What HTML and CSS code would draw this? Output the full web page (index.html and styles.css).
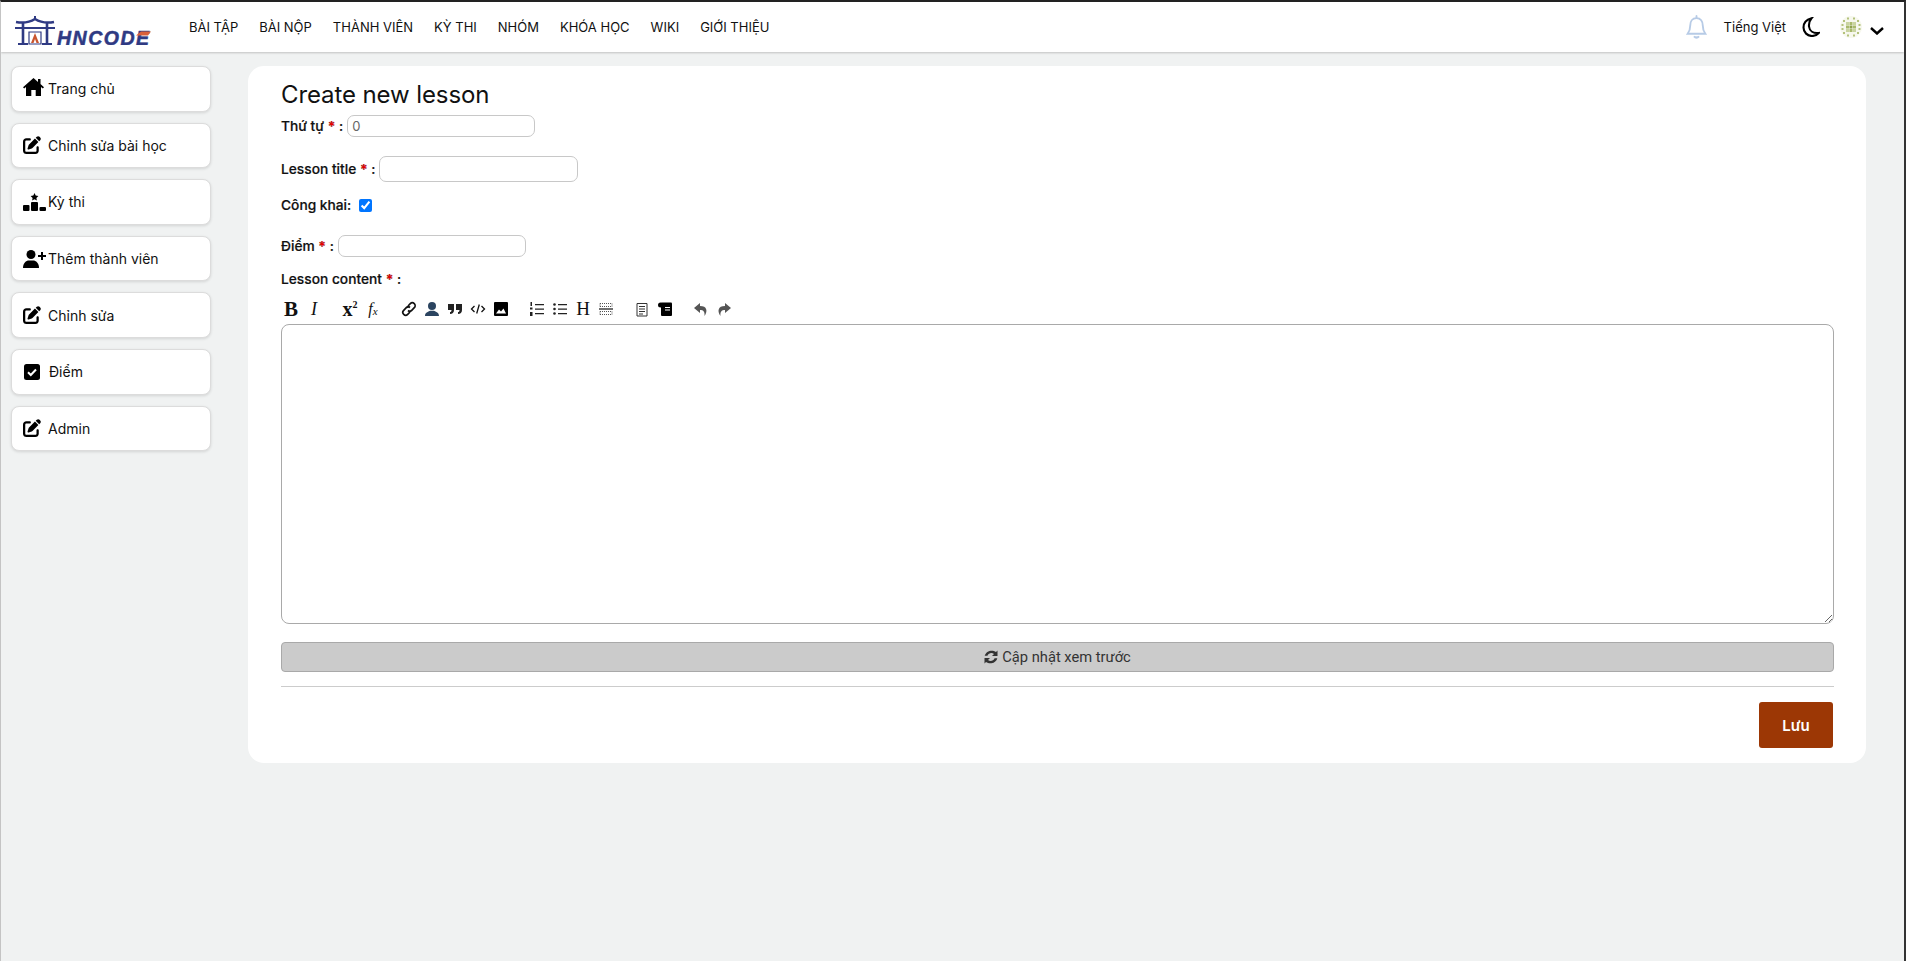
FILE: index.html
```html
<!DOCTYPE html>
<html>
<head>
    <meta charset="UTF-8">
    <link rel="stylesheet" href="styles.css">
</head>
<body>
<svg class="defs" width="0" height="0">
    <symbol id="i-edit" viewBox="0 0 512 512"><path d="M471.6 21.7c-21.9-21.9-57.3-21.9-79.2 0L362.3 51.7l97.9 97.9 30.1-30.1c21.9-21.9 21.9-57.3 0-79.2L471.6 21.7zm-299.2 220c-6.1 6.1-10.8 13.6-13.5 21.9l-29.6 88.8c-2.9 8.6-.6 18.1 5.8 24.6s15.9 8.7 24.6 5.8l88.8-29.6c8.2-2.7 15.7-7.4 21.9-13.5L437.7 172.3 339.7 74.3 172.4 241.7zM96 64C43 64 0 107 0 160V416c0 53 43 96 96 96H352c53 0 96-43 96-96V320c0-17.7-14.3-32-32-32s-32 14.3-32 32v96c0 17.7-14.3 32-32 32H96c-17.7 0-32-14.3-32-32V160c0-17.7 14.3-32 32-32h96c17.7 0 32-14.3 32-32s-14.3-32-32-32H96z"/></symbol>
</svg>

<nav class="navbar">
    <a class="logo">
        <svg width="138" height="32" viewBox="0 0 138 32">
            <g fill="none" stroke="#2f3a83">
                <path d="M1 9 Q12 11 20 6 Q28 11 39 9" stroke-width="2.600"/>
                <path d="M20 6V3" stroke-width="2"/>
                <path d="M0 15H40" stroke-width="2.200"/>
                <path d="M8 10V31M32 10V31" stroke-width="2.600"/>
                <path d="M3 31H13M27 31H37" stroke-width="2"/>
                <path d="M14 19H26V31H14Z" stroke-width="1.200"/>
            </g>
            <path d="M20 20L16 30H18.500L20 26L21.500 30H24Z" fill="#c9552f"/>
            <text x="42" y="32" class="logo-text">HNCODE</text>
            <path d="M121 22.500L133 22.500L136 18.500L126 18.500Z" fill="#d9603a"/>
        </svg>
    </a>
    <ul class="nav-links">
        <li>BÀI TẬP</li>
        <li>BÀI NỘP</li>
        <li>THÀNH VIÊN</li>
        <li>KỲ THI</li>
        <li>NHÓM</li>
        <li>KHÓA HỌC</li>
        <li>WIKI</li>
        <li>GIỚI THIỆU</li>
    </ul>
    <div class="nav-right">
        <svg class="bell" width="21" height="24" viewBox="0 0 20 23" fill="none" stroke="#b7cbe6" stroke-width="1.800">
            <path d="M10 3C6 3 4 6 4 10C4 14 3 16 1.500 18H18.500C17 16 16 14 16 10C16 6 14 3 10 3Z"/>
            <path d="M10 1V3" stroke-linecap="round"/>
            <path d="M7.500 20.500Q10 23 12.500 20.500" fill="#b7cbe6"/>
        </svg>
        <span class="lang">Tiếng Việt</span>
        <svg class="moon" width="18" height="20" viewBox="0 0 18 20" fill="none" stroke="#000" stroke-width="2.100">
            <path d="M9.500 1.200C4.500 2.500 1.500 6 1.500 10.500C1.500 15.500 5.500 19 10 19C12.800 19 15 18 16.700 16C11.500 16.500 7.500 14 7 9.500C6.700 6 7.500 3.500 9.500 1.200Z"/>
        </svg>
        <svg class="avatar" width="22" height="22" viewBox="0 0 22 22" fill="#a9b96b">
            <rect width="22" height="22" rx="11" fill="#f7f8ee"/>
            <g fill="#c9d4a0">
                <rect x="6" y="6" width="3" height="3"/><rect x="13" y="6" width="3" height="3"/>
                <rect x="6" y="13" width="3" height="3"/><rect x="13" y="13" width="3" height="3"/>
            </g>
            <rect x="9.500" y="6" width="3" height="3"/><rect x="9.500" y="13" width="3" height="3"/>
            <rect x="6" y="9.500" width="3" height="3"/><rect x="13" y="9.500" width="3" height="3"/>
            <rect x="9.500" y="9.500" width="3" height="3" fill="#8fa24e"/>
            <g fill="#b4c27c">
                <rect x="3" y="4" width="2" height="2"/><rect x="7" y="1.500" width="2" height="2"/><rect x="13" y="1.500" width="2" height="2"/><rect x="17" y="4" width="2" height="2"/>
                <rect x="1.500" y="8" width="2" height="2"/><rect x="18.500" y="8" width="2" height="2"/><rect x="1.500" y="12" width="2" height="2"/><rect x="18.500" y="12" width="2" height="2"/>
                <rect x="3" y="16" width="2" height="2"/><rect x="7" y="18.500" width="2" height="2"/><rect x="13" y="18.500" width="2" height="2"/><rect x="17" y="16" width="2" height="2"/>
            </g>
        </svg>
        <svg class="chevron" width="14" height="8" viewBox="0 0 14 8" fill="none" stroke="#000" stroke-width="2.400">
            <path d="M1 1L7 6.500L13 1"/>
        </svg>
    </div>
</nav>

<div class="wrapper">
    <aside class="sidebar">
        <a class="side-item">
            <svg class="side-icon home" width="21" height="18" viewBox="0 0 21 18"><path d="M10.500 0L0 9.200L1.200 10.500L3 9V18H8.300V12H12.700V18H18V9L19.800 10.500L21 9.200L17.500 6.100V1H15V4L10.500 0Z"/></svg>
            <span>Trang chủ</span>
        </a>
        <a class="side-item">
            <svg class="side-icon edit" width="18" height="18"><use href="#i-edit"/></svg>
            <span>Chỉnh sửa bài học</span>
        </a>
        <a class="side-item">
            <svg class="side-icon wide" width="23" height="18" viewBox="0 0 23 18"><path d="M11.500 0L12.700 2.600L15.400 3L13.400 4.900L13.900 7.600L11.500 6.300L9.100 7.600L9.600 4.900L7.600 3L10.300 2.600Z"/><rect x="8" y="9" width="7" height="9" rx="1"/><rect y="12" width="6.500" height="6" rx="1"/><rect x="16.500" y="14" width="6.500" height="4" rx="1"/></svg>
            <span>Kỳ thi</span>
        </a>
        <a class="side-item">
            <svg class="side-icon wide" width="23" height="18" viewBox="0 0 23 18"><circle cx="8" cy="4.500" r="4.500"/><path d="M0 18C0 13 3 10.500 6 10.500H10C13 10.500 16 13 16 18Z"/><path d="M18 3H20V6H23V8H20V11H18V8H15V6H18Z" transform="translate(0 -1)"/></svg>
            <span>Thêm thành viên</span>
        </a>
        <a class="side-item">
            <svg class="side-icon edit" width="18" height="18"><use href="#i-edit"/></svg>
            <span>Chỉnh sửa</span>
        </a>
        <a class="side-item">
            <svg class="side-icon check" width="16" height="16" viewBox="0 0 16 16"><rect width="16" height="16" rx="2.500"/><path d="M4 8.200L6.800 11L12 5.500" fill="none" stroke="#fff" stroke-width="2"/></svg>
            <span>Điểm</span>
        </a>
        <a class="side-item">
            <svg class="side-icon edit" width="18" height="18"><use href="#i-edit"/></svg>
            <span>Admin</span>
        </a>
    </aside>

    <main class="card">
        <h2 class="title">Create new lesson</h2>
        <form>
            <div class="row row-order">
                <label>Thứ tự <b class="req">*</b> :</label>
                <input class="field" type="text" placeholder="0">
            </div>
            <div class="row row-lesson">
                <label>Lesson title <b class="req">*</b> :</label>
                <input class="field field-lg" type="text">
            </div>
            <div class="row row-public">
                <label>Công khai:</label>
                <input class="check-box" type="checkbox" checked>
            </div>
            <div class="row row-score">
                <label>Điểm <b class="req">*</b> :</label>
                <input class="field" type="text">
            </div>
            <div class="row row-content">
                <label>Lesson content <b class="req">*</b> :</label>
            </div>

            <div class="toolbar">
                <div class="tool-group">
                    <span class="tool tool-text bold b-btn">B</span>
                    <span class="tool tool-text italic">I</span>
                </div>
                <div class="tool-group">
                    <span class="tool tool-text bold sup-btn">x<sup>2</sup></span>
                    <span class="tool tool-text fx">f<sub>x</sub></span>
                </div>
                <div class="tool-group">
                    <svg class="tool" width="16" height="16" viewBox="0 0 16 16" fill="none" stroke="#111" stroke-width="1.700"><path d="M7 5L9.300 2.700A2.700 2.700 0 0 1 13.300 6.700L10.500 9.500A2.700 2.700 0 0 1 7 9.500"/><path d="M9 11L6.700 13.300A2.700 2.700 0 0 1 2.700 9.300L5.500 6.500A2.700 2.700 0 0 1 9 6.500"/></svg>
                    <svg class="tool" width="16" height="16" viewBox="0 0 16 16" fill="#2b4460"><circle cx="8" cy="5" r="4"/><path d="M1 15C1 11.500 4 10.800 6.300 9.800H9.700C12 10.800 15 11.500 15 15Z"/></svg>
                    <svg class="tool" width="16" height="16" viewBox="0 0 16 16" fill="#222"><path d="M1 3H7V9C7 11.500 5.500 13 3 13V11C4 11 4.500 10.500 4.500 9H1Z"/><path d="M9 3H15V9C15 11.500 13.500 13 11 13V11C12 11 12.500 10.500 12.500 9H9Z"/></svg>
                    <svg class="tool" width="16" height="16" viewBox="0 0 16 16" fill="none" stroke="#111" stroke-width="1.300"><path d="M4.500 5L1.500 8L4.500 11M11.500 5L14.500 8L11.500 11M9.300 3.500L6.700 12.500"/></svg>
                    <svg class="tool" width="16" height="16" viewBox="0 0 16 16"><rect x="1" y="1" width="14" height="14" rx="1"/><path d="M3 12.500L6 8.500L8 10.500L10.500 7.500L13 12.500Z" fill="#fff"/></svg>
                </div>
                <div class="tool-group">
                    <svg class="tool" width="16" height="16" viewBox="0 0 16 16" fill="#222"><path d="M1.500 1H3V5H1.500ZM1 6.500H3.500V8.500H1ZM1 11H3.500V15H1Z"/><path d="M6 3H15V4.300H6ZM6 7.500H15V8.800H6ZM6 12H15V13.300H6Z"/></svg>
                    <svg class="tool" width="16" height="16" viewBox="0 0 16 16" fill="#222"><circle cx="2.500" cy="3.500" r="1.300"/><circle cx="2.500" cy="8" r="1.300"/><circle cx="2.500" cy="12.500" r="1.300"/><path d="M6 3H15V4.300H6ZM6 7.500H15V8.800H6ZM6 12H15V13.300H6Z"/></svg>
                    <span class="tool tool-text heading">H</span>
                    <svg class="tool" width="16" height="16" viewBox="0 0 16 16" fill="none" stroke="#555"><path d="M2 2.500H14M2 5.500H14M2 10.500H14M2 13.500H14M2 2.500V5.500M14 2.500V5.500M2 10.500V13.500M14 10.500V13.500" stroke-dasharray="1 1"/><path d="M1 8H15" stroke="#222" stroke-width="1.300"/></svg>
                </div>
                <div class="tool-group">
                    <svg class="tool" width="16" height="16" viewBox="0 0 16 16" fill="none" stroke="#333"><path d="M3 2.500H13V15H3Z"/><path d="M5 5.500H11M5 8H11M5 10.500H11M5 13H9"/></svg>
                    <svg class="tool" width="16" height="16" viewBox="0 0 16 16"><rect x="4" y="1.500" width="11" height="13.500" rx="1"/><circle cx="3.500" cy="4" r="2.500"/><path d="M8 6.500H13M8 9H13" stroke="#fff" stroke-width="1.200"/></svg>
                </div>
                <div class="tool-group">
                    <svg class="tool" width="16" height="16" viewBox="0 0 16 16" fill="#555"><path d="M7 2L1 7L7 12V9C10 9 12 10 11.500 15C15 10 14 5 7 5Z"/></svg>
                    <svg class="tool" width="16" height="16" viewBox="0 0 16 16" fill="#555"><path d="M9 2L15 7L9 12V9C6 9 4 10 4.500 15C1 10 2 5 9 5Z"/></svg>
                </div>
            </div>

            <textarea class="editor"></textarea>

            <button class="preview" type="button">
                <svg width="14" height="14" viewBox="0 0 14 14" fill="#333"><path d="M13.500 .5V6H8L10 4C7.800 2.300 4.600 3 3.400 5.800H.7C2 1 8 -.9 12 2Z"/><path d="M.5 13.500V8H6L4 10C6.200 11.700 9.400 11 10.600 8.200H13.300C12 13 6 14.900 2 12Z"/></svg>
                Cập nhật xem trước
            </button>
            <hr class="divider">
            <div class="actions">
                <button class="save" type="button">Lưu</button>
            </div>
        </form>
    </main>
</div>
</body>
</html>
```

FILE: styles.css
```css
* {
    box-sizing: border-box;
}

html, body {
    height: 100%;
}

body {
    margin: 0;
    overflow: hidden;
    background-color: #f0f2f2;
    border-top: 2px solid #222;
    border-left: 1px solid #c4c4c4;
    border-right: 2px solid #333;
    font-family: Inter, "Noto Sans", sans-serif;
    font-size: 14px;
    color: #111;
}

.defs {
    display: block;
}

/* top bar */
.navbar {
    display: flex;
    align-items: center;
    height: 50px;
    padding-left: 14px;
    background-color: #fff;
    box-shadow: 0 1px 2px rgba(0, 0, 0, 0.2);
}

.logo {
    display: block;
    height: 32px;
    width: 138px;
    margin-top: 4px;
}

.logo-text {
    font-family: "Liberation Sans", sans-serif;
    font-weight: 700;
    font-style: italic;
    font-size: 19.500px;
    letter-spacing: 1.500px;
    fill: #2f3a83;
    stroke: #2f3a83;
    stroke-width: 0.500px;
}

.nav-links {
    display: flex;
    gap: 21px;
    list-style: none;
    margin: 0 0 0 36px;
    padding: 0;
    font-family: Inter, sans-serif;
    font-size: 13px;
    color: #111;
}

.nav-right {
    display: flex;
    align-items: center;
    margin-left: auto;
    padding-right: 20px;
}

.bell {
    margin-right: 1px;
}

.lang {
    margin-left: 16px;
    font-family: Inter, sans-serif;
    font-size: 13px;
}

.moon {
    margin-left: 16px;
}

.avatar {
    margin-left: 20px;
}

.chevron {
    margin-left: 8px;
    margin-top: 7px;
}

/* page body */
.wrapper {
    display: flex;
    align-items: flex-start;
    padding: 14px 38px 0 10px;
}

.sidebar {
    display: flex;
    flex-direction: column;
    gap: 11px;
    flex: 0 0 200px;
    margin-right: 37px;
}

.side-item {
    display: flex;
    align-items: center;
    height: 45.600px;
    padding-left: 11px;
    background-color: #fff;
    border: 1px solid #dcdcdc;
    border-radius: 8px;
    box-shadow: 0 1px 3px rgba(0, 0, 0, 0.12);
    color: #111;
}

.side-icon {
    flex: none;
    margin-right: 2px;
}

.side-icon.home {
    margin: 0 4px 3px 0;
}

.side-icon.edit {
    margin: 0 7px 0 0;
}

.side-icon.check {
    margin: 0 9px 0 1px;
}

/* form card */
.card {
    flex: 1;
    height: 697px;
    padding: 14px 32px 0 33px;
    background-color: #fff;
    border-radius: 16px;
}

.title {
    margin: 0;
    font-size: 24px;
    line-height: 29px;
    font-weight: 400;
    letter-spacing: -0.100px;
}

.row {
    display: flex;
    align-items: center;
    gap: 4px;
}

.row label {
    font-size: 13.750px;
    font-weight: 500;
    -webkit-text-stroke: 0.200px #111;
}

.req {
    color: red;
    font-weight: 700;
}

.row-order {
    height: 22px;
    margin-top: 6px;
}

.row-lesson {
    height: 26px;
    margin-top: 19px;
}

.row-public {
    height: 24px;
    margin-top: 11px;
}

.row-score {
    height: 22px;
    margin-top: 18px;
}

.row-content {
    height: 20px;
    margin-top: 12px;
}

.field {
    width: 188px;
    height: 100%;
    padding: 0 4px;
    border: 1px solid #c8c8c8;
    border-radius: 7px;
    font: 13px Inter, sans-serif;
    outline: none;
}

.field-lg {
    width: 199px;
}

.field::placeholder {
    color: #666;
}

.check-box {
    width: 13px;
    height: 13px;
    margin: 0 0 0 4px;
    accent-color: #0075ff;
}

.toolbar {
    display: flex;
    align-items: center;
    height: 24px;
    margin-top: 8px;
    gap: 20px;
    padding-left: 2px;
}

.tool-group {
    display: flex;
    align-items: center;
    gap: 7px;
}

.tool {
    display: block;
    width: 16px;
    height: 16px;
}

.tool-text {
    font-family: "Liberation Serif", serif;
    line-height: 16px;
    text-align: center;
    color: #111;
    font-size: 18px;
}

.bold {
    font-weight: 700;
}

.italic {
    font-style: italic;
}

.b-btn {
    font-size: 21px;
}

.sup-btn {
    font-size: 20px;
}

.sup-btn sup {
    font-size: 10px;
    line-height: 0;
}

.fx {
    font-style: italic;
    font-size: 16px;
}

.fx sub {
    font-size: 11px;
    line-height: 0;
    vertical-align: -1px;
}

.heading {
    font-size: 19px;
}

.editor {
    display: block;
    width: 100%;
    height: 300px;
    margin-top: 3px;
    border: 1px solid #a9a9a9;
    border-radius: 8px;
    outline: none;
}

.preview {
    display: flex;
    align-items: center;
    justify-content: center;
    gap: 4px;
    width: 100%;
    height: 30px;
    margin-top: 18px;
    background-color: #cbcbcb;
    border: 1px solid #a9a9a9;
    border-radius: 4px;
    font-family: Roboto, sans-serif;
    font-size: 14.700px;
    color: #333;
}

.divider {
    margin: 14px 0 0;
    border: 0;
    border-top: 1px solid #ccc;
}

.actions {
    display: flex;
    justify-content: flex-end;
    margin-top: 15px;
}

.save {
    width: 74px;
    height: 46px;
    margin-right: 1px;
    background-color: #9c3705;
    border: 0;
    border-radius: 3px;
    color: #fff;
    font-family: Inter, sans-serif;
    font-size: 15px;
    font-weight: 600;
}
```
